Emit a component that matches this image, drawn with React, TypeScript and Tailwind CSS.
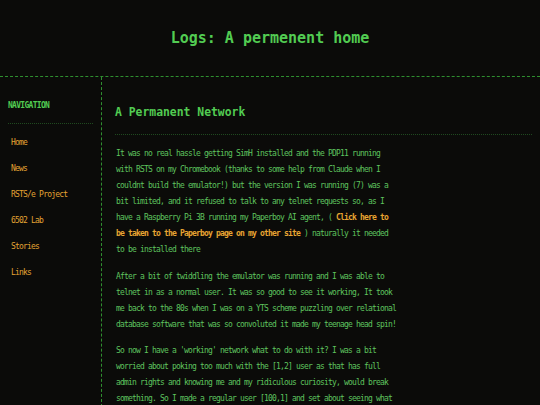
import React from "react";

const mono = { fontFamily: '"DejaVu Sans Mono", "Liberation Mono", monospace' };

function Lines({ lines }: { lines: React.ReactNode[] }) {
  return (
    <>
      {lines.map((l, i) => (
        <span key={i} className="block whitespace-nowrap">
          {l}
        </span>
      ))}
    </>
  );
}

export default function App() {
  const nav = ["Home", "News", "RSTS/e Project", "6502 Lab", "Stories", "Links"];
  const link = "font-bold text-[#e8a532]";
  return (
    <div
      className="min-h-[405px] w-full overflow-hidden bg-[#0b0b09] text-[#5ec45e]"
      style={mono}
    >
      <header className="flex h-[77px] items-center justify-center border-b border-dashed border-[#2f8f2f] pb-[1px]">
        <h1 className="text-[15px] font-bold leading-[18px] text-[#52cc52]">
          Logs: A permenent home
        </h1>
      </header>
      <div className="flex">
        <aside className="w-[102px] shrink-0 border-r border-dashed border-[#2f8f2f] px-[8px] pt-[23px] min-h-[330px]">
          <div className="border-b border-dotted border-[#1f4a1f] pb-[11px] text-[8px] font-bold leading-[12px] tracking-[-0.7px] text-[#52cc52]">
            NAVIGATION
          </div>
          <ul className="mt-[6px]">
            {nav.map((n) => (
              <li
                key={n}
                className="h-[26px] pl-[3px] text-[8px] leading-[26px] tracking-[-0.8px] text-[#e3a433]"
              >
                {n}
              </li>
            ))}
          </ul>
        </aside>
        <main className="flex-1 pl-[13px] pr-[8px] pt-[28px]">
          <h2 className="text-[11.4px] font-bold leading-[14px] text-[#52cc52]">
            A Permanent Network
          </h2>
          <div className="mt-[15px] border-b border-dotted border-[#1f4a1f]" />
          <div className="pl-[1px] pt-[11px] text-[8px] leading-[16px] tracking-[-0.816px]">
            <p className="mb-[11px]">
              <Lines
                lines={[
                  "It was no real hassle getting SimH installed and the PDP11 running",
                  "with RSTS on my Chromebook (thanks to some help from Claude when I",
                  "couldnt build the emulator!) but the version I was running (7) was a",
                  "bit limited, and it refused to talk to any telnet requests so, as I",
                  <>
                    have a Raspberry Pi 3B running my Paperboy AI agent, ({" "}
                    <span className={link}>Click here to</span>
                  </>,
                  <>
                    <span className={link}>be taken to the Paperboy page on my other site</span> ) naturally it needed
                  </>,
                  "to be installed there",
                ]}
              />
            </p>
            <p className="mb-[10px]">
              <Lines
                lines={[
                  "After a bit of twiddling the emulator was running and I was able to",
                  "telnet in as a normal user. It was so good to see it working, It took",
                  "me back to the 80s when I was on a YTS scheme puzzling over relational",
                  "database software that was so convoluted it made my teenage head spin!",
                ]}
              />
            </p>
            <p>
              <Lines
                lines={[
                  "So now I have a 'working' network what to do with it? I was a bit",
                  "worried about poking too much with the [1,2] user as that has full",
                  "admin rights and knowing me and my ridiculous curiosity, would break",
                  "something. So I made a regular user [100,1] and set about seeing what",
                ]}
              />
            </p>
          </div>
        </main>
      </div>
    </div>
  );
}
